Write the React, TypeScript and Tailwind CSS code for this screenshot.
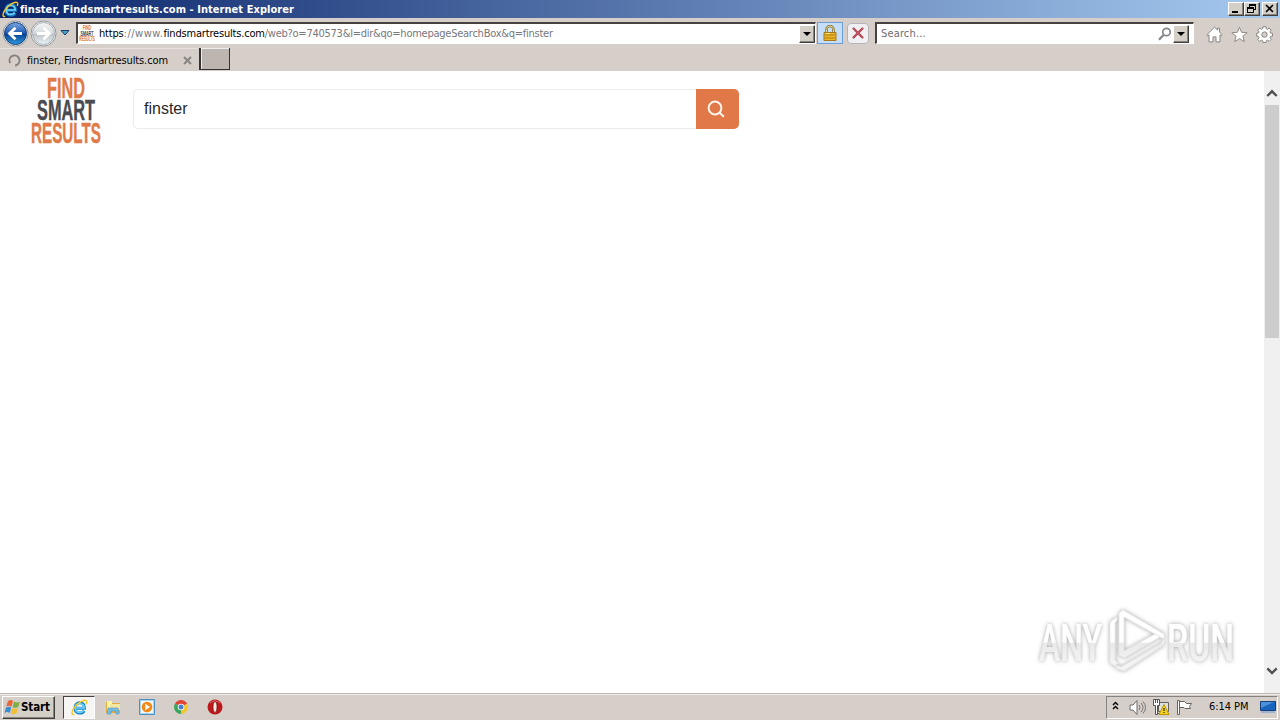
import type { ReactNode } from "react";

const uiFont = "font-['DejaVu_Sans_Condensed','DejaVu_Sans',sans-serif]";
const raised = "border border-t-white border-l-white border-r-[#404040] border-b-[#404040] bg-[#d4d0c8] shadow-[inset_-1px_-1px_#87837c]";

function IeLogo({ size }: { size: number }) {
  return (
    <svg width={size} height={size} viewBox="0 0 18 18" fill="none" className="shrink-0">
      <path d="M4.4 9.8h9.8c.2-3.4-1.7-5.8-4.9-5.8-3.1 0-5.1 2.2-5.1 5.4 0 3.3 2 5.5 5.1 5.5 2.2 0 3.7-.9 4.5-2.5" stroke="#1683c9" strokeWidth="3.2" />
      <path d="M4.4 9.6h9.6c0-3-1.7-4.9-4.7-4.9-2.9 0-4.6 2-4.6 4.7 0 2.9 1.8 4.8 4.6 4.8 1.9 0 3.2-.7 4.1-2" stroke="#6dd2f9" strokeWidth="1.7" />
      <path d="M3.4 16.4C.3 17.2.2 13.6 3.4 9.3 7.3 4.1 13.1.6 15.7 1.5c1.3.5 1.1 2.2.4 3.8" stroke="#f5c62c" strokeWidth="1.5" />
    </svg>
  );
}

function NavArrow({ forward = false }: { forward?: boolean }) {
  return (
    <svg width="27" height="27" viewBox="0 0 27 27" className="shrink-0">
      <defs>
        <linearGradient id={forward ? "fwd" : "back"} x1="0" y1="0" x2="0" y2="1">
          <stop offset="0" stopColor={forward ? "#f4f5f6" : "#7ba7df"} />
          <stop offset=".48" stopColor={forward ? "#d8dcde" : "#215bb3"} />
          <stop offset=".52" stopColor={forward ? "#bdc4c9" : "#073d91"} />
          <stop offset="1" stopColor={forward ? "#e8f2f5" : "#2f9ee0"} />
        </linearGradient>
      </defs>
      <circle cx="13.5" cy="13.5" r="12.5" fill="#f8f8f8" stroke="#8f9699" />
      <circle cx="13.5" cy="13.5" r="11" fill={forward ? "url(#fwd)" : "url(#back)"} stroke={forward ? "#a9b0b4" : "#143b76"} />
      <path
        d={forward ? "M7 13.5h12M13.5 7.8l6 5.7-6 5.7" : "M20 13.5H8M13.5 7.8l-6 5.7 6 5.7"}
        fill="none" stroke="white" strokeWidth="2.8"
      />
    </svg>
  );
}

function BrandMark({ width, height }: { width: number; height: number }) {
  return (
    <svg width={width} height={height} viewBox="0 0 72 66" preserveAspectRatio="none" className="shrink-0 overflow-visible font-['Liberation_Sans_Narrow','Liberation_Sans',sans-serif] font-bold">
      <g fill="#e07a48" stroke="#e07a48" strokeWidth=".4">
        <text x="17" y="19.7" fontSize="29" textLength="38" lengthAdjust="spacingAndGlyphs">FIND</text>
        <text x="1" y="64.7" fontSize="29" textLength="70" lengthAdjust="spacingAndGlyphs">RESULTS</text>
      </g>
      <text x="7" y="42.2" fontSize="29" textLength="58" lengthAdjust="spacingAndGlyphs" fill="#4b4c50" stroke="#4b4c50" strokeWidth=".4">SMART</text>
    </svg>
  );
}

function WinButton({ children }: { children: ReactNode }) {
  return (
    <div className={`h-[14px] w-4 ${raised}`}>
      <svg width="14" height="12" viewBox="0 0 14 12" fill="none" stroke="black" shapeRendering="crispEdges">{children}</svg>
    </div>
  );
}

function DropButton() {
  return (
    <div className={`flex h-[18px] w-4 shrink-0 items-center justify-center ${raised}`}>
      <svg width="8" height="4" viewBox="0 0 8 4"><path d="M0 0h8L4 4z" /></svg>
    </div>
  );
}

function TitleBar() {
  return (
    <header className="flex h-[18px] items-center bg-[linear-gradient(90deg,#0a246a,#a6caf0)] pr-[2px] pl-[2px]">
      <IeLogo size={17} />
      <span className="ml-px pt-px text-[11px] leading-[18px] font-bold tracking-[0.05px] whitespace-nowrap text-white">finster, Findsmartresults.com - Internet Explorer</span>
      <div className="ml-auto flex">
        <WinButton><path d="M3 9h6" strokeWidth="2" /></WinButton>
        <WinButton><path d="M4.5 4V1.5h6v5H8M4 2h7M2.5 4.5h6v5h-6zM2 5h7" /></WinButton>
        <div className="ml-[2px]"><WinButton><path d="M3 2l7 7M10 2L3 9" strokeWidth="1.6" shapeRendering="auto" /></WinButton></div>
      </div>
    </header>
  );
}

function Toolbar() {
  const field = "flex h-[22px] items-center border-t-2 border-l-2 border-r border-b border-t-[#45423f] border-l-[#45423f] border-r-white border-b-white bg-white";
  return (
    <div className="flex h-[30px] items-center bg-[#d6cfc9] pl-[2px] text-[11px]">
      <NavArrow />
      <div className="ml-px"><NavArrow forward /></div>
      <svg width="10" height="6" viewBox="0 0 10 6" className="ml-[3px]"><path d="M1 .5h8L5 5z" fill="#4aa2ca" stroke="#173f65" /></svg>
      <div className={`ml-[6px] w-[740px] ${field}`}>
        <div className="ml-px"><BrandMark width={16} height={15} /></div>
        <span className="ml-[4px] pt-[2px] tracking-[-0.187px] whitespace-nowrap text-[#77777c]">
          <span className="text-black">https</span><span className="tracking-[0.5px]">://www.</span><span className="text-black">findsmartresults.com</span><span className="tracking-[-0.25px]">/web?o=740573&amp;l=dir&amp;qo=homepageSearchBox&amp;q=finster</span>
        </span>
        <div className="ml-auto"><DropButton /></div>
      </div>
      <div className="ml-px flex h-[22px] w-[26px] items-center justify-center border border-[#6c9fd7] bg-[#c6def8]">
        <svg width="14" height="17" viewBox="0 0 14 17">
          <path d="M3.5 8V4.5a3.5 3.5 0 0 1 7 0V8" fill="none" stroke="#88712e" strokeWidth="2.5" />
          <path d="M3.5 8V4.5a3.5 3.5 0 0 1 7 0V8" fill="none" stroke="#e3d594" strokeWidth="1" />
          <path d="M1 7.5h12v8H1z" fill="#e8b626" stroke="#a4781a" />
          <path d="M2 10h10M2 13h10" stroke="#b57a0c" /><path d="M3 8.5h4" stroke="#ffee88" />
        </svg>
      </div>
      <div className="ml-1 flex h-[21px] w-[22px] items-center justify-center rounded-sm border border-[#b4b4b8] bg-[#f0f0f3]">
        <svg width="12" height="12" viewBox="0 0 12 12"><path d="M1 1l10 10M11 1L1 11" stroke="#8d3446" strokeWidth="2.2" /><path d="M1 1l10 10M11 1L1 11" stroke="#d65460" strokeWidth="1.1" /></svg>
      </div>
      <div className={`ml-[6px] w-[319px] pr-[4px] pl-[4px] ${field}`}>
        <span className="pt-[2px] tracking-[0.15px] text-[#6d6d70]">Search...</span>
        <svg width="14" height="14" viewBox="0 0 14 14" className="ml-auto" fill="none" stroke="#85858c"><circle cx="8.5" cy="5" r="3.7" strokeWidth="1.7" /><path d="M5.8 7.8L1 12.7" strokeWidth="2.3" /></svg>
        <div className="ml-px"><DropButton /></div>
      </div>
      <div className="ml-[12px] flex items-center gap-[8px] pt-[3px]">
        <svg width="17" height="17" viewBox="0 0 17 17" fill="white" stroke="#898581"><path d="M.8 8.8L8.5 1.2 11.5 4V2.2h2v3.9l2.7 2.7-1 1-1.2-1v7.1h-4v-5H7v5H3V8.8l-1.2 1z" /></svg>
        <svg width="17" height="17" viewBox="0 0 18 17" fill="white" stroke="#898581"><path d="M9 .9l2.2 5.3 5.9.4-4.5 3.7 1.5 5.7L9 12.9 3.9 16l1.5-5.7L.9 6.6l5.9-.4z" /></svg>
        <svg width="17" height="17" viewBox="0 0 17 17" fill="white" stroke="#898581"><path fillRule="evenodd" d="M7 .8h3l.3 2 1.2.5 1.7-1.2 2 2-1.2 1.7.5 1.2 2 .3v2.8l-2 .4-.5 1.2 1.2 1.7-2 2-1.7-1.2-1.2.5-.3 1.8H7l-.4-1.8-1.2-.5-1.7 1.2-2-2L3 11.7l-.5-1.2-1.9-.4V7.3l1.9-.3L3 5.8 1.7 4.1l2-2 1.7 1.2 1.2-.5zM8.5 5.9a2.7 2.7 0 1 0 0 5.4 2.7 2.7 0 0 0 0-5.4z" /></svg>
      </div>
    </div>
  );
}

function TabStrip() {
  return (
    <div className="flex h-[23px] items-start bg-[#d6cfc9] text-[11px]">
      <div className="flex h-[23px] w-[198px] items-center border-t border-[#e7e2df] pt-px pl-[8px]">
        <svg width="13" height="13" viewBox="0 0 13 13"><circle cx="6.5" cy="6.5" r="5" fill="none" stroke="#85817e" strokeWidth="2" strokeDasharray="25 7" transform="rotate(150 6.5 6.5)" /></svg>
        <span className="ml-[6px] pt-px tracking-[-0.12px] whitespace-nowrap text-black">finster, Findsmartresults.com</span>
        <svg width="9" height="9" viewBox="0 0 9 9" className="mr-[6px] ml-auto"><path d="M1 1l7 7M8 1L1 8" stroke="#89847f" strokeWidth="2" /></svg>
      </div>
      <div className="ml-px h-[22px] w-[31px] border-l-2 border-r border-b border-[#343130] bg-[#bdb5b0] shadow-[inset_1px_1px_#eee]" />
    </div>
  );
}

function AnyRun() {
  return (
    <svg width="210" height="76" viewBox="0 0 210 76" className="absolute right-[22px] bottom-[13px] overflow-visible font-['Roboto',sans-serif]">
      <defs>
        <filter id="soft" x="-15%" y="-15%" width="130%" height="130%"><feDropShadow dx="0" dy="0" stdDeviation="1.9" floodColor="#666" floodOpacity=".62" /></filter>
        <linearGradient id="wm" gradientUnits="userSpaceOnUse" x1="0" y1="19" x2="0" y2="57"><stop offset="0" stopColor="#fff" /><stop offset=".5" stopColor="#fff" /><stop offset=".54" stopColor="#e9e9e9" /><stop offset="1" stopColor="#f3f3f3" /></linearGradient>
      </defs>
      <g filter="url(#soft)" fill="url(#wm)">
        <text x="7" y="56.5" fontSize="52" fontWeight="500" textLength="63" lengthAdjust="spacingAndGlyphs">ANY</text>
        <text x="135" y="56.5" fontSize="52" fontWeight="500" textLength="67" lengthAdjust="spacingAndGlyphs">RUN</text>
        <g stroke="#e3e3e3" strokeWidth=".7" strokeLinejoin="round">
          <path d="M78 18l7-5v3l-2 3v37l3 3-3 3-5-3z" />
          <path d="M87 9l4-3 41 24v5L92 13v34l31-17 5 3-36 21-5-3z" />
          <path d="M84 61l5 2 39-23 4-4v5L92 67l-8-3z" />
        </g>
      </g>
    </svg>
  );
}

function Page() {
  return (
    <main className="flex h-[622px] bg-white">
      <section className="relative flex flex-1 items-start pt-[7px] pl-[30px]">
        <BrandMark width={72} height={66} />
        <div className="mt-[11px] ml-[31px] flex h-10 w-[606px] font-['Liberation_Sans',Arial,sans-serif]">
          <div className="flex flex-1 items-center rounded-l-[5px] border border-r-0 border-[#ebebeb] pl-[10px] text-[16px] text-[#292929]">finster</div>
          <button aria-label="Search" className="flex w-[43px] items-center justify-center rounded-r-[5px] bg-[#e07848] pr-[3px]">
            <svg width="18" height="18" viewBox="0 0 18 18" fill="none" stroke="#fff4e9" strokeWidth="2" strokeLinecap="round"><circle cx="8" cy="8" r="6.4" /><path d="M12.7 12.7l3.6 3.6" /></svg>
          </button>
        </div>
        <AnyRun />
      </section>
      <aside className="flex w-4 flex-col bg-[#f0f0f0]">
        <svg width="16" height="34" viewBox="0 0 16 34"><path d="M3.3 25L8 20.3l4.7 4.7" fill="none" stroke="#515151" strokeWidth="2.4" /></svg>
        <div className="ml-px h-[233px] w-[14px] bg-[#cdcdcd]" />
        <svg width="16" height="16" viewBox="0 0 16 16" className="mt-auto mb-[14px]"><path d="M3.3 5.3L8 10l4.7-4.7" fill="none" stroke="#515151" strokeWidth="2.4" /></svg>
      </aside>
    </main>
  );
}

function Taskbar() {
  return (
    <footer className="flex h-[27px] items-center border-t border-[#bdb7b2] bg-[#d6cfc9] pl-[2px] text-[11px] text-black shadow-[inset_0_1px_#f2efed]">
      <div className={`flex h-[23px] w-[53px] items-center pl-px ${raised}`}>
        <svg width="17" height="17" viewBox="0 0 17 17" className="shrink-0"><path d="M4 2q3-2 5 0L7.6 7.5q-3-1.5-5.4 0z" fill="#ea6638" /><path d="M10 2.6q3 1.8 5.8.2L14.3 8q-3 1.7-5.7-.1z" fill="#7eac45" /><path d="M2 8.5q3-1.7 5.3 0L5.8 14q-2.5-1.8-5.3 0z" fill="#3d8dd2" /><path d="M8.3 9q3 1.7 5.6 0l-1.4 5.2q-3 2-5.6.2z" fill="#f1bf37" /></svg>
        <span className="pt-px text-[11.5px] font-bold tracking-[-0.1px]">Start</span>
      </div>
      <div className="ml-2 flex h-[23px] w-[32px] items-center justify-center border border-t-[#444] border-r-white border-b-white border-l-[#444] bg-[#f7f5f3]"><IeLogo size={17} /></div>
      <div className="ml-[10px] flex items-center gap-[18px]">
        <svg width="16" height="16" viewBox="0 0 16 16"><path d="M1 3h5l1 1h8v10H1z" fill="#e3ad3d" /><path d="M2 2h5v10H2z" fill="#faf4a4" /><path d="M5 5h10v6H5z" fill="#f4e6a1" /><path d="M3 9h10l1 6h-3v-3H6v3H2z" fill="#73bde4" stroke="#5799bd" strokeWidth=".6" /></svg>
        <svg width="16" height="16" viewBox="0 0 16 16"><path d="M.5.5h15v15H.5z" fill="#a8d4ef" stroke="#4b91c2" /><path d="M2 2h12v12H2z" fill="#f6f8fa" /><circle cx="8" cy="8" r="5.3" fill="#f28a18" /><path d="M6.3 4.8L11 8l-4.7 3.2z" fill="white" /></svg>
        <svg width="16" height="16" viewBox="0 0 16 16"><path d="M8 8L2 4.5A7 7 0 0 1 14.1 4.7z" fill="#e14334" /><path d="M8 8L14.1 4.7A7 7 0 0 1 8 15z" fill="#f4c62b" /><path d="M8 8v7A7 7 0 0 1 2 4.5z" fill="#3fa45b" /><circle cx="8" cy="8" r="3.3" fill="white" /><circle cx="8" cy="8" r="2.5" fill="#477fd2" /></svg>
        <svg width="16" height="16" viewBox="0 0 16 16"><circle cx="8" cy="8" r="7.5" fill="#bd191c" /><path d="M3 4a7 7 0 0 1 10 0" stroke="#df6866" fill="none" /><ellipse cx="8" cy="8" rx="2" ry="5.5" fill="#f6e9e5" stroke="#751113" strokeWidth=".7" /></svg>
      </div>
      <div className="mr-[2px] ml-auto flex h-[23px] w-[172px] items-center border border-t-[#88827e] border-r-white border-b-white border-l-[#88827e] pl-[5px]">
        <svg width="7" height="9" viewBox="0 0 7 9" fill="none" stroke="black" strokeWidth="1.4" className="mb-1"><path d="M1 4l2.5-2.5L6 4M1 8l2.5-2.5L6 8" /></svg>
        <svg width="17" height="17" viewBox="0 0 17 17" className="ml-[10px]"><path d="M1 6h3l4-4.5v14L4 11H1z" fill="#fff" stroke="#6d6d6d" /><path d="M10 6q2 2.5 0 5M12 4q4 4.5 0 9M14 2.5q5 6 0 12" fill="none" stroke="#77736f" /></svg>
        <svg width="17" height="17" viewBox="0 0 17 17" className="ml-[7px]"><path d="M5.5 3.5h10v9h-10zM4 14.5h10" fill="#dedede" stroke="#66635f" /><path d="M.5.5h6v6h-2v9h-2v-9h-2z" fill="white" stroke="#56534e" /><path d="M2.5.5V4M4.5.5V4" stroke="#56534e" /><path d="M11 5.5l5 10H6z" fill="#f6d322" stroke="#b99600" /><path d="M11 9v3m0 1v1" stroke="black" /></svg>
        <svg width="17" height="17" viewBox="0 0 17 17" className="ml-[6px]"><path d="M1.5 1.5h2v14h-2zM3.5 2.5h5l2 2h5l-2 3 1 2H9l-1-1H3.5z" fill="white" stroke="#67635f" /></svg>
        <span className="ml-[16px] pt-px whitespace-nowrap tracking-[-0.05px]">6:14 PM</span>
        <svg width="16" height="14" viewBox="0 0 16 14" className="mr-px ml-auto"><path d="M.5 1.5h15v9H.5z" fill="#1763bd" stroke="#183f7c" /><path d="M1 2h13L1 8z" fill="#4b92db" /><path d="M1 12h14" stroke="#8aabd0" strokeWidth="1.5" /></svg>
      </div>
    </footer>
  );
}

export default function App() {
  return (
    <div className={`h-[720px] w-[1280px] overflow-hidden bg-white ${uiFont}`}>
      <TitleBar />
      <Toolbar />
      <TabStrip />
      <Page />
      <Taskbar />
    </div>
  );
}
